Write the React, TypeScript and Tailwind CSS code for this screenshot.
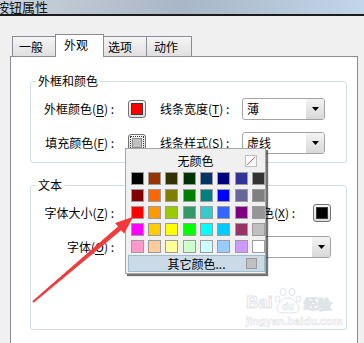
import React from "react";

const PALETTE = [
  ["#000000", "#993300", "#333300", "#003300", "#003366", "#000080", "#333399", "#333333"],
  ["#800000", "#ff6600", "#808000", "#008000", "#008080", "#0000ff", "#666699", "#808080"],
  ["#ff0000", "#ff9900", "#99cc00", "#339966", "#33cccc", "#3366ff", "#800080", "#969696"],
  ["#ff00ff", "#ffcc00", "#ffff00", "#00ff00", "#00ffff", "#00ccff", "#993366", "#c0c0c0"],
  ["#ff99cc", "#ffcc99", "#ffff99", "#ccffcc", "#ccffff", "#99ccff", "#cc99ff", "#ffffff"],
];

const Key = ({ k }: { k: string }) => <span className="underline underline-offset-2">{k}</span>;

// label text stays on one line; right-aligned ones overflow to the left
const Label = ({ text, k, className }: { text: string; k: string; className: string }) => (
  <div className={`flex whitespace-nowrap ${className}`}>
    <span>
      {text}(<Key k={k} />) :
    </span>
  </div>
);

const Swatch = ({ color, focus }: { color: string; focus?: boolean }) => (
  <div className="flex h-[18px] w-[18px] items-center justify-center rounded-[3px] border border-[#727272] bg-gradient-to-b from-[#f7f7f7] to-[#dcdcdc]">
    {focus ? (
      <div className="flex h-[14px] w-[14px] items-center justify-center border border-dotted border-[#333]">
        <div className="h-[10px] w-[10px] border border-[#8a8a8a] bg-[#c0c0c0]" />
      </div>
    ) : (
      <div className="h-[12px] w-[12px] border border-[#3a3a3a]" style={{ backgroundColor: color }} />
    )}
  </div>
);

const Combo = ({ text, className }: { text: string; className: string }) => (
  <div className={`flex h-[22px] overflow-hidden rounded-[3px] border border-[#a3a3a3] bg-white ${className}`}>
    <div className="flex-1 pl-[4px] text-[12px] leading-[20px]">{text}</div>
    <div className="flex w-[18px] items-center justify-center bg-gradient-to-b from-[#f4f4f4] to-[#d8d8d8]">
      <svg width="7" height="4" viewBox="0 0 7 4">
        <path d="M0 0h7L3.5 4z" fill="#000" />
      </svg>
    </div>
  </div>
);

const Tab = ({ text, active, className }: { text: string; active?: boolean; className: string }) => (
  <div
    className={
      active
        ? `relative z-10 -mb-px h-[23px] border border-b-0 border-[#898c95] bg-white text-[12px] leading-[19px] ${className}`
        : `h-[20px] border border-b-0 border-[#898c95] bg-gradient-to-b from-[#f5f5f5] to-[#e0e0e0] text-[12px] leading-[19px] ${className}`
    }
  >
    {text}
  </div>
);

const ColorPopup = () => (
  <div className="absolute left-[125px] top-[148px] z-20 h-[126px] w-[141px] border border-[#a7a7a7] bg-[#f0f0f0] shadow-[2px_2px_1px_rgba(0,0,0,0.55)]">
    <div className="mt-[2px] grid h-[20px] grid-cols-[1fr_auto_1fr] items-center">
      <div />
      <div className="text-[12px] leading-[16px]">无颜色</div>
      <div className="flex justify-end pr-[8px]">
        <svg width="12" height="12" viewBox="0 0 12 12">
          <rect x="0.5" y="0.5" width="11" height="11" fill="#fff" stroke="#bdbdbd" />
          <path d="M2 10L10 2" stroke="#f05050" strokeWidth="1" />
        </svg>
      </div>
    </div>
    <div className="mt-[1px] grid grid-cols-[repeat(8,13px)] gap-x-[4.33px] gap-y-[4.1px] pl-[4.7px]">
      {PALETTE.flat().map((c, i) => (
        <div key={i} className="h-[13px] w-[13px] border border-[#9c9c9c]" style={{ backgroundColor: c }} />
      ))}
    </div>
    <div className="ml-[2px] mt-[1.3px] grid h-[17px] grid-cols-[1fr_auto_1fr] items-center border border-[#9dbbcd] bg-[#cadbe7]">
      <div />
      <div className="text-[12px] leading-[15px]">其它颜色...</div>
      <div className="flex justify-end pr-[7px]">
        <div className="h-[11px] w-[11px] border border-[#9a9a9a] bg-[#c0c0c0]" />
      </div>
    </div>
  </div>
);

export default function App() {
  return (
    <div className="relative h-[343px] w-[364px] overflow-hidden bg-[#f0f0f0] font-['Noto_Sans_CJK_SC','Microsoft_YaHei',sans-serif] text-black">
      {/* title bar */}
      <div className="h-[16px] overflow-hidden border-b-[2px] border-[#1c1c1c] bg-gradient-to-r from-[#ccd3db] via-[#a8b6c6] to-[#c2d6ea]">
        <div className="-ml-[4px] text-[13px] leading-[14px] text-[#111]">按钮属性</div>
      </div>

      {/* tabs */}
      <div className="flex items-end pl-[12px] pt-[18px]">
        <Tab text="一般" className="w-[44px] pl-[6px]" />
        <Tab text="外观" active className="-ml-px w-[49px] pl-[8px]" />
        <Tab text="选项" className="-ml-px w-[44px] pl-[4px]" />
        <Tab text="动作" className="-ml-px w-[46px] pl-[7px]" />
      </div>

      {/* panel */}
      <div className="ml-[10px] mr-[6px] h-[300px] border border-[#898c95] bg-white pl-[19px] pr-[10px] pt-[16px]">
        <fieldset className="rounded-[3px] border border-[#d3dde4] p-0">
          <legend className="ml-[5px] px-[2px] text-[12px] leading-[16px]">外框和颜色</legend>
          <div className="grid grid-cols-[70px_18px_68px_83px] items-center gap-x-[14px] gap-y-[12px] pb-[8px] pl-[13px] pt-[9px] text-[12px] leading-[16px]">
            <Label text="外框颜色" k="B" className="justify-end" />
            <Swatch color="#ff0000" />
            <Label text="线条宽度" k="T" className="justify-start" />
            <Combo text="薄" className="w-[83px]" />
            <Label text="填充颜色" k="F" className="justify-end" />
            <Swatch color="#c0c0c0" focus />
            <Label text="线条样式" k="S" className="justify-start" />
            <Combo text="虚线" className="w-[83px]" />
          </div>
        </fieldset>

        <fieldset className="mt-[14px] rounded-[3px] border border-[#d3dde4] p-0">
          <legend className="ml-[5px] px-[2px] text-[12px] leading-[16px]">文本</legend>
          <div className="flex flex-col gap-y-[12px] pb-[71px] pl-[13px] pt-[9px] text-[12px] leading-[16px]">
            <div className="flex items-center">
              <Label text="字体大小" k="Z" className="w-[70px] shrink-0 justify-end" />
              <Combo text="" className="ml-[14px] w-[84px] shrink-0" />
              <Label text="字体颜色" k="X" className="ml-[15px] w-[68px] shrink-0 justify-end" />
              <div className="ml-[18px] shrink-0">
                <Swatch color="#000000" />
              </div>
            </div>
            <div className="flex items-center">
              <Label text="字体" k="O" className="w-[70px] shrink-0 justify-end" />
              <Combo text="" className="ml-[14px] w-[203px] shrink-0" />
            </div>
          </div>
        </fieldset>
      </div>

      <ColorPopup />

      {/* red annotation arrow */}
      <svg className="pointer-events-none absolute left-0 top-0 z-30" width="364" height="343" viewBox="0 0 364 343">
        <polygon
          points="32.3,301.2 118,226.5 115.1,223.1 133.3,216.7 124.1,233.7 121.2,230.3 33.7,302.8"
          fill="#f23a3a"
        />
      </svg>

      {/* watermark */}
      <div className="pointer-events-none absolute left-[246px] top-[288px] flex flex-col items-start text-white [-webkit-text-stroke:1px_#dfe4e8]">
        <div className="flex items-end gap-[2px] font-['Liberation_Sans',sans-serif] text-[17px] font-bold leading-[20px]">
          <span>Bai</span>
          <svg width="28" height="26" viewBox="0 0 28 26" className="mb-[-1px]">
            <g fill="#fff" stroke="#dfe4e8">
              <ellipse cx="9" cy="4" rx="3" ry="3.5" />
              <ellipse cx="18" cy="4" rx="3" ry="3.5" />
              <ellipse cx="3.5" cy="11" rx="2.5" ry="3" />
              <ellipse cx="24.5" cy="11" rx="2.5" ry="3" />
              <path d="M14 10c-6 0-11 7-11 11 0 3 3 4 11 4s11-1 11-4c0-4-5-11-11-11z" />
            </g>
            <text x="14" y="22" textAnchor="middle" fontSize="10" fontWeight="bold" fill="#fff" stroke="#dfe4e8" strokeWidth="0.6" fontFamily="Liberation Sans, sans-serif">du</text>
          </svg>
          <span className="text-[14px] leading-[18px]">经验</span>
        </div>
        <div className="mt-[2px] font-['Liberation_Sans',sans-serif] text-[11px] font-bold leading-[12px] [-webkit-text-stroke:0.6px_#dfe4e8]">
          jingyan.baidu.com
        </div>
      </div>
    </div>
  );
}
